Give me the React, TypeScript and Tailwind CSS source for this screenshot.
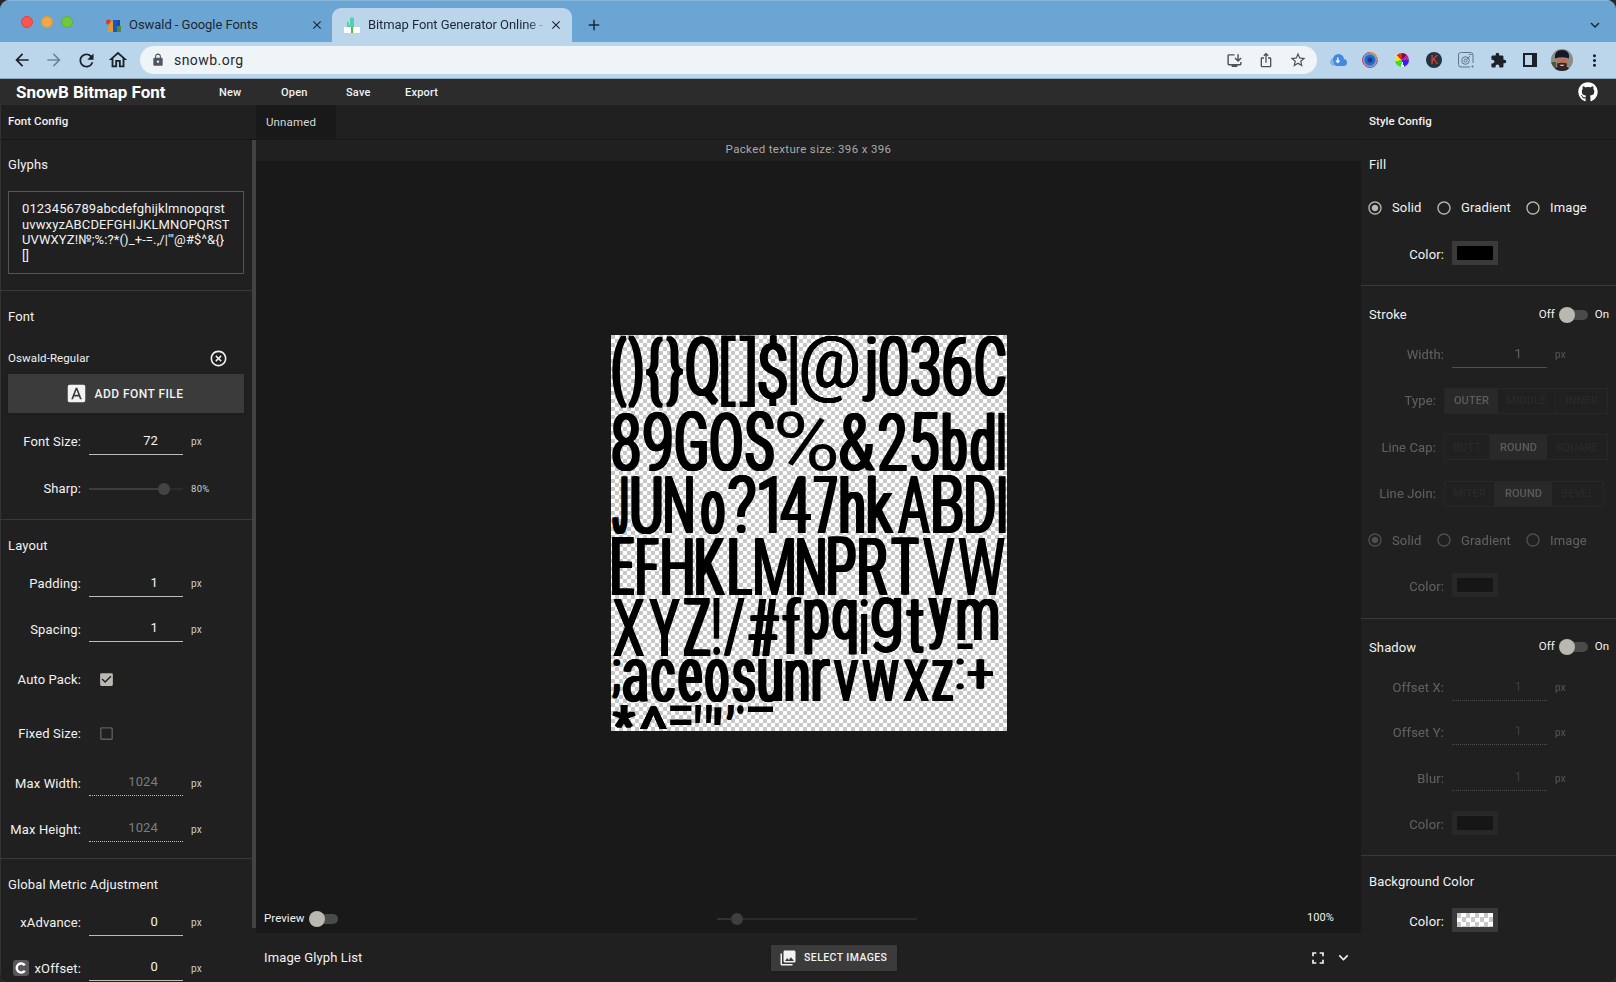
import React, { useMemo, type ReactNode } from "react";
import {
  MdArrowBack,
  MdArrowForward,
  MdRefresh,
  MdOutlineHome,
  MdLock,
  MdClose,
  MdAdd,
  MdExpandMore,
  MdOutlineInstallDesktop,
  MdIosShare,
  MdStarBorder,
  MdExtension,
  MdMoreVert,
  MdHighlightOff,
  MdFontDownload,
  MdPhotoLibrary,
  MdFullscreen,
  MdCheckBox,
  MdCheckBoxOutlineBlank,
  MdRadioButtonChecked,
  MdRadioButtonUnchecked,
} from "react-icons/md";
import { FaGithub } from "react-icons/fa";

/* ------------------------------------------------------------------ */
/* Packed texture                                                      */
/* ------------------------------------------------------------------ */

type Glyph = [string, number, number, number, number];

// Ink boxes (x0, y0, x1, y1) in thirds of a pixel.
const GLYPHS: Glyph[] = [
  ["(", 3, 3, 47, 222], [")", 51, 3, 96, 222], ["{", 105, 3, 156, 220], ["}", 164, 3, 216, 220],
  ["Q", 225, 3, 322, 214], ["[", 330, 3, 375, 216], ["]", 385, 3, 432, 216], ["$", 441, 3, 528, 214],
  ["|", 537, 3, 558, 210], ["@", 570, 3, 744, 206], ["j", 753, 3, 795, 202], ["0", 805, 3, 891, 183],
  ["3", 899, 3, 987, 183], ["6", 996, 3, 1083, 183], ["C", 1092, 3, 1185, 183],
  ["8", 3, 232, 87, 410], ["9", 96, 232, 183, 410], ["G", 192, 232, 288, 410], ["O", 297, 232, 393, 410],
  ["S", 402, 232, 489, 410], ["%", 498, 232, 675, 410], ["&", 685, 232, 793, 410], ["2", 802, 232, 888, 408],
  ["5", 900, 232, 984, 409], ["b", 994, 232, 1068, 408], ["d", 1078, 232, 1152, 408], ["l", 1161, 232, 1182, 405],
  ["J", 3, 421, 50, 597], ["U", 60, 421, 153, 597], ["N", 162, 421, 246, 594], ["o", 270, 469, 342, 597],
  ["?", 351, 421, 435, 597], ["1", 444, 421, 498, 594], ["4", 507, 421, 600, 594], ["7", 607, 421, 678, 594],
  ["h", 687, 421, 760, 594], ["k", 769, 421, 849, 594], ["A", 860, 421, 957, 594], ["B", 966, 421, 1056, 594],
  ["D", 1065, 421, 1152, 594], ["I", 1161, 421, 1185, 594],
  ["E", 3, 607, 70, 780], ["F", 78, 607, 144, 780], ["H", 153, 607, 246, 780], ["K", 255, 607, 343, 780],
  ["L", 354, 607, 424, 780], ["M", 432, 607, 549, 780], ["N", 558, 607, 642, 780], ["P", 651, 607, 735, 780],
  ["R", 744, 607, 831, 780], ["T", 840, 607, 924, 780], ["V", 935, 607, 1032, 780], ["W", 1041, 607, 1182, 780],
  ["X", 5, 789, 101, 963], ["Y", 113, 789, 208, 963], ["Z", 218, 789, 298, 963], ["!", 305, 789, 328, 963],
  ["/", 337, 789, 402, 963], ["#", 411, 789, 505, 963], ["f", 513, 789, 571, 957], ["p", 579, 789, 654, 957],
  ["q", 663, 789, 738, 957], ["i", 747, 789, 771, 957], ["g", 780, 789, 872, 955], ["t", 885, 795, 939, 954],
  ["y", 951, 789, 1024, 946], ["m", 1038, 789, 1162, 915], ["-", 1038, 924, 1086, 942],
  [";", 3, 973, 28, 1093], ["a", 35, 973, 111, 1101], ["c", 120, 973, 193, 1101], ["e", 201, 973, 274, 1101],
  ["o", 282, 973, 354, 1101], ["s", 363, 973, 433, 1101], ["u", 441, 973, 514, 1101], ["n", 522, 973, 594, 1098],
  ["r", 603, 973, 658, 1098], ["v", 667, 973, 743, 1098], ["w", 754, 973, 864, 1098], ["x", 877, 973, 955, 1098],
  ["z", 963, 973, 1027, 1098], [":", 1035, 973, 1059, 1065], ["+", 1068, 973, 1147, 1062],
  ["*", 4, 1113, 74, 1183], ["^", 86, 1113, 169, 1182], ["=", 177, 1113, 243, 1170], ['"', 251, 1113, 303, 1168],
  ["'", 310, 1113, 333, 1168], [",", 345, 1113, 369, 1161], [".", 378, 1113, 399, 1140], ["_", 410, 1113, 486, 1131],
];

const EM = 100;
// Stem width of the regular weight at EM size.
const STEM = 9.2;
const LIGHT_STEMS = "MNWVwvxXYA/";
const NO_SPREAD = "|lI!i:.'\"-_=[]";

function layoutGlyphs() {
  const ctx = document.createElement("canvas").getContext("2d")!;
  ctx.font = `400 ${EM}px Roboto, sans-serif`;
  return GLYPHS.map(([char, x0, y0, x1, y1]) => {
    const m = ctx.measureText(char);
    const inkW = m.actualBoundingBoxRight + m.actualBoundingBoxLeft;
    const inkH = m.actualBoundingBoxAscent + m.actualBoundingBoxDescent;
    const w = (x1 - x0) / 3;
    const h = (y1 - y0) / 3;
    const stem = LIGHT_STEMS.includes(char) ? 6.8 : 8;
    const wanted = ",;".includes(char) ? 2.5 : (stem - (STEM * w) / inkW) / (1 - STEM / inkW);
    const spread = NO_SPREAD.includes(char) ? 0 : Math.max(0, Math.min(4, wanted));
    const sx = (w - spread) / inkW;
    const sy = h / inkH;
    const asc = m.fontBoundingBoxAscent;
    const desc = m.fontBoundingBoxDescent;
    const baseline = (EM - asc - desc) / 2 + asc;
    const tx = x0 / 3 + m.actualBoundingBoxLeft * sx;
    const ty = y0 / 3 - (baseline - m.actualBoundingBoxAscent) * sy;
    const step = spread / sx / 4;
    return {
      char,
      style: {
        transform: `translate(${tx}px, ${ty}px) scale(${sx}, ${sy})`,
        textShadow: spread ? [1, 2, 3, 4].map((i) => `${step * i}px 0 0 #000`).join(", ") : "none",
      },
    };
  });
}

function Texture() {
  const glyphs = useMemo(layoutGlyphs, []);
  return (
    <div className="relative size-[396px] bg-white bg-[conic-gradient(#fff_25%,#c8c8c8_0_50%,#fff_0_75%,#c8c8c8_0)] bg-[length:8px_8px]">
      {glyphs.map((g, i) => (
        <span
          key={i}
          className="absolute top-0 left-0 origin-top-left text-[100px] leading-[100px] font-normal tracking-normal whitespace-pre text-black"
          style={g.style}
        >
          {g.char}
        </span>
      ))}
    </div>
  );
}

/* ------------------------------------------------------------------ */
/* Browser chrome                                                      */
/* ------------------------------------------------------------------ */

function BrowserTabs() {
  return (
    <div className="flex h-[42px] shrink-0 items-end border-t border-[#86b6dc] bg-[#6ba5d3] text-[#1c2835]">
      <div className="flex h-[41px] w-[332px] items-center">
        <div className="ml-[21px] flex gap-2">
          <span className="size-3 rounded-full border border-[#e0443e] bg-[#fc5550]" />
          <span className="size-3 rounded-full border border-[#de9a3a] bg-[#f0a847]" />
          <span className="size-3 rounded-full border border-[#5fb03a] bg-[#72c83d]" />
        </div>
        <svg viewBox="0 0 16 14" className="mt-2 ml-[33px] h-[14px] w-4">
          <circle cx="2.5" cy="3" r="2.5" fill="#ea3323" />
          <path d="M4 3h3v10H1z" fill="#e59a2d" />
          <path d="M7 1h4v12H7z" fill="#1a56c4" />
          <path d="M11 1h3v6h-3z" fill="#1b4a9a" />
          <path d="M11 7h4v6h-4z" fill="#4c8c3c" />
        </svg>
        <span className="mt-[6px] ml-[7px] w-[182px] text-[13px] tracking-[-0.05px]">Oswald - Google Fonts</span>
        <MdClose className="mt-[7px] -ml-px size-[14px]" />
      </div>
      <div className="flex h-[34px] w-[240px] items-center rounded-t-[9px] bg-[#bbd5eb]">
        <svg viewBox="0 0 16 18" className="ml-3 h-[18px] w-4">
          <path d="M0 11h16v6H0z" fill="#fff" />
          <path d="M6 3q2-4 4 0v8H6z" fill="#4fd0b0" />
          <path d="M3 6h2v3h3v2H3z" fill="#4fd0b0" />
          <path d="M7 11h2v6H7z" fill="#59b83e" />
        </svg>
        <span className="-mt-px ml-2 w-[176px] bg-gradient-to-r from-[#1c2835] from-90% to-[#9db5c9] bg-clip-text text-[13px] leading-4 tracking-[-0.08px] whitespace-nowrap text-transparent">
          Bitmap Font Generator Online -
        </span>
        <MdClose className="ml-[5px] size-[14px]" />
      </div>
      <MdAdd className="mb-[8px] ml-[13px] size-[18px]" />
      <MdExpandMore className="mr-[12px] mb-[8px] ml-auto size-[18px]" />
    </div>
  );
}

function Slot({ children }: { children: ReactNode }) {
  return <span className="flex w-8 items-center justify-center">{children}</span>;
}

function Toolbar() {
  return (
    <div className="flex h-[37px] shrink-0 items-center border-b border-[#8fa9be] bg-[#bbd5eb] text-[#1c2127]">
      <div className="ml-[6px] flex w-[134px]">
        <Slot><MdArrowBack className="size-[20px]" /></Slot>
        <Slot><MdArrowForward className="size-[20px] text-[#70859a]" /></Slot>
        <Slot><MdRefresh className="size-[21px]" /></Slot>
        <Slot><MdOutlineHome className="size-[22px]" /></Slot>
      </div>
      <div className="flex h-7 w-[1177px] items-center rounded-full bg-[#eff4f9]">
        <MdLock className="ml-[11px] size-[14px] text-[#50565d]" />
        <span className="ml-[9px] text-[14px] tracking-[0.45px] text-[#24292e]">snowb.org</span>
        <div className="mr-[3px] ml-auto flex text-[#4b5157]">
          <Slot><MdOutlineInstallDesktop className="size-[17px]" /></Slot>
          <Slot><MdIosShare className="size-[16px]" /></Slot>
          <Slot><MdStarBorder className="size-[18px]" /></Slot>
        </div>
      </div>
      <div className="ml-[5px] flex">
        <Slot>
          <svg viewBox="0 0 17 14" className="h-[14px] w-[17px]">
            <circle cx="4" cy="9" r="3.8" fill="#7eb2ee" />
            <circle cx="8.5" cy="6.5" r="5.5" fill="#4688e0" />
            <rect x="4" y="6" width="13" height="7" rx="3.5" fill="#4688e0" />
            <path d="M7.8 4.5v4M6 7.5l1.8 2 1.8-2" stroke="#e4effc" strokeWidth="1.5" fill="none" />
          </svg>
        </Slot>
        <Slot>
          <svg viewBox="0 0 16 16" className="size-4">
            <circle cx="8" cy="8" r="7.5" fill="#6ea4e8" stroke="#d93a5c" />
            <path d="M8 .5A7.5 7.5 0 0 1 15.5 8" stroke="#f0a030" fill="none" />
            <circle cx="8" cy="8" r="5.5" fill="#2868c4" />
            <circle cx="8" cy="8" r="2.5" fill="#123e86" />
          </svg>
        </Slot>
        <Slot>
          <span className="size-[14px] rounded-full bg-[conic-gradient(#7b1238_12%,#d41ca6_12%_25%,#3a20e0_25%_45%,#f4f4ff_45%_52%,#38e02c_52%_72%,#f4e61c_72%_86%,#e8281e_86%)]" />
        </Slot>
        <Slot>
          <span className="flex size-4 items-center justify-center rounded-full bg-[#25323f] text-[12px] leading-none text-[#e2402c]">K</span>
        </Slot>
        <Slot>
          <svg viewBox="0 0 16 16" className="size-4" fill="none" stroke="#5f7488">
            <path d="M15 11V3a2.5 2.5 0 0 0-2.5-2.5h-9A2.5 2.5 0 0 0 .5 3v9.5A2.5 2.5 0 0 0 3 15h9" />
            <circle cx="7.5" cy="8.5" r="3.8" />
            <circle cx="7.5" cy="8.5" r="1.5" />
            <path d="M9 7l3-3M11 2.5h2.5" />
            <circle cx="14.5" cy="14.5" r=".7" />
          </svg>
        </Slot>
        <Slot><MdExtension className="size-[17px]" /></Slot>
        <Slot>
          <span className="h-[14px] w-[14px] border-2 border-r-[5px] border-[#1c2127]" />
        </Slot>
        <Slot>
          <svg viewBox="0 0 22 22" className="size-[22px]">
            <defs>
              <clipPath id="avatar"><circle cx="11" cy="11" r="11" /></clipPath>
            </defs>
            <g clipPath="url(#avatar)">
              <path d="M0 0h22v22H0z" fill="#8d8a86" />
              <path d="M0 13h5v9H0z" fill="#4c5a34" />
              <path d="M3 22q1-5 8-5t8 5z" fill="#25242a" />
              <ellipse cx="11" cy="12.5" rx="5" ry="6.5" fill="#b5735c" />
              <path d="M6 14.5q5-1.500 10 0 0 6.500-5 6.500t-5-6.500z" fill="#3a2320" />
              <path d="M8.5 15.8h5q-2.5 2.6-5 0z" fill="#f1e3dc" />
              <path d="M4 9.500q-1-8.500 7-8.500t7 8.500q-7-2.500-14 0z" fill="#10182a" />
            </g>
          </svg>
        </Slot>
        <Slot><MdMoreVert className="size-[19px]" /></Slot>
      </div>
    </div>
  );
}

/* ------------------------------------------------------------------ */
/* Form pieces                                                         */
/* ------------------------------------------------------------------ */

function Divider() {
  return <div className="h-px shrink-0 bg-[#393939]" />;
}

function Title({ children, className }: { children: ReactNode; className: string }) {
  return <div className={`flex shrink-0 items-center px-2 ${className}`}>{children}</div>;
}

function Field({
  label, value, className, dotted, faded, line = "border-[#bcbcb4]", side = "left", icon,
}: {
  label: string; value: string; className: string; dotted?: boolean; faded?: boolean;
  line?: string; side?: "left" | "right"; icon?: ReactNode;
}) {
  return (
    <div className={`flex shrink-0 items-center ${className}`}>
      <div className={`flex items-center justify-end gap-[6px] text-right whitespace-nowrap ${side === "left" ? "w-[81px]" : "w-[83px]"}`}>
        {icon}
        {label}
      </div>
      <div className={`ml-2 flex h-[26px] items-center justify-end border-b pr-[25px] pb-[2px] ${side === "left" ? "w-[94px]" : "w-[95px]"} ${dotted ? "border-dotted" : ""} ${line}`}>
        <span className={faded ? "text-[#7d7d7d]" : ""}>{value}</span>
      </div>
      <span className="ml-2 pt-px text-[10px] text-[#cfcfcf]">px</span>
    </div>
  );
}

function Radios({ className }: { className: string }) {
  return (
    <div className={`flex shrink-0 items-center ${className}`}>
      <MdRadioButtonChecked className="ml-[6px] size-4 text-[#b9b9b1]" />
      <span className="ml-[9px] w-[45px]">Solid</span>
      <MdRadioButtonUnchecked className="-ml-px size-4 text-[#b9b9b1]" />
      <span className="ml-[9px] w-[63px]">Gradient</span>
      <MdRadioButtonUnchecked className="ml-px size-4 text-[#b9b9b1]" />
      <span className="ml-[9px]">Image</span>
    </div>
  );
}

function Swatch({ className, fill }: { className: string; fill: string }) {
  return (
    <div className={`flex shrink-0 items-center ${className}`}>
      <div className="w-[83px] pt-[3px] text-right">Color:</div>
      <div className="ml-2 flex h-6 w-[46px] items-center justify-center bg-[#3a3a3a]">
        <div className={`h-[14px] w-9 ${fill}`} />
      </div>
    </div>
  );
}

function Toggle() {
  return (
    <span className="flex items-center">
      <span className="z-10 size-4 rounded-full bg-[#b9b9b1]" />
      <span className="-ml-3 h-[10px] w-[25px] rounded-full bg-[#4a4a4a]" />
    </span>
  );
}

function OnOff() {
  return (
    <div className="-mr-px ml-auto flex items-center text-[11.5px] tracking-normal">
      <span className="w-[20px]">Off</span>
      <Toggle />
      <span className="ml-[7px]">On</span>
    </div>
  );
}

function Choice({ label, options, active, widths, className }: {
  label: string; options: string[]; active: number; widths: string[]; className: string;
}) {
  return (
    <div className={`flex shrink-0 items-center ${className}`}>
      <div className="w-[75px] text-right">{label}</div>
      <div className="ml-2 flex h-[26px] border border-[#3a3a3a] text-[11px] font-medium tracking-[0.1px]">
        {options.map((o, i) => (
          <div
            key={o}
            className={`flex items-center justify-center ${widths[i]} ${
              i === active ? "bg-[#3f3f3f] text-[#e0e0e0]" : "border-r border-[#343434] text-[#404040] last:border-r-0"
            }`}
          >
            {o}
          </div>
        ))}
      </div>
    </div>
  );
}

/* ------------------------------------------------------------------ */
/* Panels                                                              */
/* ------------------------------------------------------------------ */

const PANEL_HEAD = "flex h-[35px] shrink-0 items-center border-b border-[#171717] px-2 pb-[1px] text-[11.5px] font-medium tracking-[0.05px]";

function LeftPanel() {
  return (
    <aside className="flex w-64 shrink-0 flex-col border-l border-[#333] bg-[#202020]">
      <div className="-ml-px">
        <div className={PANEL_HEAD}>Font Config</div>
      </div>
      <div className="flex min-h-0 flex-1">
        <div className="-ml-px flex w-[252px] flex-col overflow-hidden">
          <Title className="h-[50px] pb-[2px]">Glyphs</Title>
          <div className="mx-2 mt-px h-[83px] shrink-0 border border-[#555] px-[13px] pt-[9px] text-[13px] leading-[15.6px] tracking-[0.12px]">
            <div>0123456789abcdefghijklmnopqrst</div>
            <div>uvwxyzABCDEFGHIJKLMNOPQRST</div>
            <div>{"UVWXYZ!№;%:?*()_+-=.,/|'\"@#$^&{}"}</div>
            <div>[]</div>
          </div>
          <div className="h-4 shrink-0" />
          <Divider />
          <Title className="h-[51px]">Font</Title>
          <div className="flex h-8 shrink-0 items-center justify-between pr-[24px] pl-2 text-[11.5px] tracking-[0.1px]">
            <span className="pt-[2px]">Oswald-Regular</span>
            <MdHighlightOff className="size-[19px]" />
          </div>
          <div className="mx-2 flex h-[39px] shrink-0 items-center justify-center bg-[#3b3b3b] pr-[3px] text-[12px] font-medium tracking-[0.45px] shadow">
            <MdFontDownload className="mr-2 size-[21px]" />
            <span className="pt-px">ADD FONT FILE</span>
          </div>
          <Field className="h-[57px]" label="Font Size:" value="72" />
          <div className="mb-[12px] flex h-[37px] shrink-0 items-center">
            <div className="w-[81px] text-right">Sharp:</div>
            <div className="ml-2 flex w-[94px] items-center">
              <span className="h-[2px] w-[69px] bg-[#3d3d3d]" />
              <span className="size-3 rounded-full bg-[#444]" />
              <span className="h-[2px] flex-1 bg-[#2c2c2c]" />
            </div>
            <span className="ml-2 text-[9.5px] tracking-[0.3px] text-[#cfcfcf]">80%</span>
          </div>
          <Divider />
          <Title className="h-[41px] pt-[9px]">Layout</Title>
          <Field className="h-[45px]" label="Padding:" value="1" />
          <Field className="h-[46px]" label="Spacing:" value="1" />
          <div className="flex h-[55px] shrink-0 items-center">
            <div className="w-[81px] text-right">Auto Pack:</div>
            <MdCheckBox className="ml-[17px] size-[17px] text-[#b9b9b1]" />
          </div>
          <div className="flex h-[53px] shrink-0 items-center">
            <div className="w-[81px] text-right">Fixed Size:</div>
            <MdCheckBoxOutlineBlank className="ml-[17px] size-[17px] text-[#5c5c5c]" />
          </div>
          <Field className="h-[46px]" label="Max Width:" value="1024" dotted faded />
          <Field className="mb-[6px] h-[46px]" label="Max Height:" value="1024" dotted faded />
          <Divider />
          <Title className="h-[41px] pt-[9px]">Global Metric Adjustment</Title>
          <Field className="h-[45px]" label="xAdvance:" value="0" />
          <Field
            className="h-[46px]"
            label="xOffset:"
            value="0"
            icon={
              <svg viewBox="0 0 16 16" className="size-4 shrink-0">
                <rect width="16" height="16" rx="3" fill="#5a575a" />
                <path d="M11.8 5.3A4.5 4.5 0 1 0 11.8 10.7" stroke="#fff" strokeWidth="2.4" fill="none" />
              </svg>
            }
          />
        </div>
        <div className="h-[788px] w-1 bg-[#444244]" />
      </div>
    </aside>
  );
}

function Workspace() {
  return (
    <main className="flex w-[1105px] shrink-0 flex-col bg-[#191919]">
      <div className="flex h-[35px] shrink-0 border-b border-[#191919] bg-[#202020]">
        <div className="flex w-20 items-center bg-[#191919] pt-[2px] pl-[10px] text-[11.5px] tracking-[0.15px] text-[#d8d8d8]">Unnamed</div>
      </div>
      <div className="flex h-[21px] shrink-0 items-center justify-center bg-[#202020] pb-px text-[11.5px] tracking-[0.35px] text-[#a9a9a9]">
        Packed texture size: 396 x 396
      </div>
      <div className="flex h-[743px] shrink-0 justify-center pt-[174px]">
        <div className="-ml-0.5 pl-[3px]"><div className="-ml-px"><Texture /></div></div>
      </div>
      <div className="flex h-[29px] shrink-0 items-center text-[11.5px]">
        <span className="ml-2 w-[45px] pt-px tracking-[0.05px]">Preview</span>
        <Toggle />
        <div className="ml-[379px] flex w-[200px] items-center">
          <span className="h-[2px] w-[14px] bg-[#333]" />
          <span className="size-3 rounded-full bg-[#3f3f3f]" />
          <span className="h-[2px] flex-1 bg-[#292929]" />
        </div>
        <span className="mr-[27px] ml-auto pb-[2px] text-[11px]">100%</span>
      </div>
      <div className="flex min-h-0 flex-1 items-center bg-[#202020]">
        <span className="ml-2 w-[507px]">Image Glyph List</span>
        <div className="mt-px flex h-[26px] w-[126px] items-center bg-[#3b3b3b] pl-[8px] text-[10.5px] font-medium tracking-[0.42px] whitespace-nowrap shadow">
          <MdPhotoLibrary className="mr-[7px] size-[18px]" />
          <span className="pt-px">SELECT IMAGES</span>
        </div>
        <MdFullscreen className="ml-auto size-5" />
        <MdExpandMore className="mr-[8px] ml-[6px] size-[19px]" />
      </div>
    </main>
  );
}

function RightPanel() {
  return (
    <aside className="flex min-w-0 flex-1 flex-col bg-[#202020]">
      <div className={PANEL_HEAD}>Style Config</div>
      <Title className="h-[50px] pb-[2px]">Fill</Title>
      <Radios className="h-[35px]" />
      <Swatch className="mb-[4px] h-[56px]" fill="bg-black" />
      <Divider />
      <Title className="h-12 pt-[9px]">Stroke<OnOff /></Title>
      <div className="flex flex-col opacity-30">
        <Field className="h-[41px]" side="right" label="Width:" value="1" />
        <Choice className="h-[51px]" label="Type:" options={["OUTER", "MIDDLE", "INNER"]} active={0} widths={["w-[53px]", "w-[58px]", "w-[51px]"]} />
        <Choice className="h-[42px]" label="Line Cap:" options={["BUTT", "ROUND", "SQUARE"]} active={1} widths={["w-[45px]", "w-[57px]", "w-[60px]"]} />
        <Choice className="h-[51px]" label="Line Join:" options={["MITER", "ROUND", "BEVEL"]} active={1} widths={["w-[50px]", "w-[57px]", "w-[51px]"]} />
        <Radios className="h-[42px]" />
        <Swatch className="mb-[9px] h-[48px]" fill="bg-black" />
      </div>
      <Divider />
      <Title className="h-[48px] pt-[8px]">Shadow<OnOff /></Title>
      <div className="flex flex-col opacity-30">
        <Field className="h-[41px]" side="right" label="Offset X:" value="1" dotted faded />
        <Field className="h-12" side="right" label="Offset Y:" value="1" dotted faded />
        <Field className="h-[44px]" side="right" label="Blur:" value="1" dotted faded />
        <Swatch className="mb-[10px] h-[45px]" fill="bg-black" />
      </div>
      <Divider />
      <Title className="h-[49px] pt-[2px]">Background Color</Title>
      <Swatch className="h-[30px]" fill="bg-[conic-gradient(#fff_25%,#c8c8c8_0_50%,#fff_0_75%,#c8c8c8_0)] bg-[length:9px_9px]" />
    </aside>
  );
}

export default function App() {
  return (
    <div className="h-[982px] w-[1616px] overflow-hidden bg-[#2b2626] font-[Roboto,sans-serif]">
      <div className="flex h-full flex-col overflow-hidden rounded-[9px] bg-[#202020] text-[13px] leading-none tracking-[0.13px] text-[#f2f2f2]">
        <BrowserTabs />
        <Toolbar />
        <header className="flex h-[26px] shrink-0 items-center bg-[#2c2c2c] text-[11px] font-medium tracking-[0.2px]">
          <span className="ml-4 w-[203px] pt-px text-[17px] font-bold tracking-[-0.02px] text-white">SnowB Bitmap Font</span>
          <span className="w-[62px]">New</span>
          <span className="w-[65px]">Open</span>
          <span className="w-[59px]">Save</span>
          <span>Export</span>
          <FaGithub className="mr-[18px] ml-auto size-5 text-white" />
        </header>
        <div className="flex min-h-0 flex-1">
          <LeftPanel />
          <Workspace />
          <RightPanel />
        </div>
      </div>
    </div>
  );
}
